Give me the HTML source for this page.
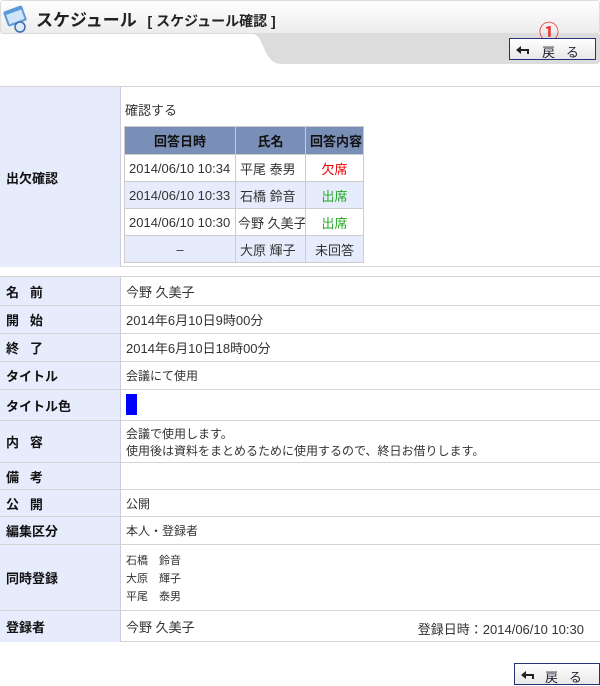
<!DOCTYPE html><html><head><meta charset="utf-8"><style>
*{margin:0;padding:0;box-sizing:border-box}
body{width:600px;height:685px;position:relative;background:#fff;font-family:"Liberation Sans","Noto Sans CJK JP",sans-serif;font-size:13px;color:#333;overflow:hidden}
.a{position:absolute;white-space:nowrap}
.lab{position:absolute;left:0;width:121px;background:#e6ecfb;border-right:1px solid #ccd;font-weight:bold;color:#111;padding-left:6px;display:flex;align-items:center;font-size:13px}
.row{position:absolute;left:0;width:600px;border-top:1px solid #d4d4d4}
.val{position:absolute;left:126px;display:flex;align-items:center;white-space:nowrap}
.btn{position:absolute;border:1px solid #223377;background:linear-gradient(#fff,#e8e8e8);font-size:13px;color:#223}
table.in{position:absolute;left:124px;top:126px;border-collapse:collapse;table-layout:fixed;width:239px}
table.in td,table.in th{border:1px solid #ccc;height:27px;font-size:13px;font-weight:normal;padding:0 4px;white-space:nowrap;overflow:hidden}
table.in th{background:#7a8fb8;font-weight:bold;color:#111;height:28px}
</style></head><body>
<div class="a" style="left:0;top:0;width:600px;height:34px;background:linear-gradient(#fff,#ececec);border:1px solid #ddd;border-radius:3px"></div>
<svg class="a" style="left:2px;top:3px" width="30" height="30"><rect x="3" y="5" width="20" height="16" rx="2" fill="#5a9ad8" transform="rotate(-20 13 13)"/><rect x="5" y="9" width="16" height="10" fill="#cfe4f7" transform="rotate(-20 13 13)"/><circle cx="18" cy="24" r="5" fill="#dfe9f5" stroke="#3a6fb0" stroke-width="1.5"/></svg>
<div class="a" style="left:36px;top:6px;font-size:17px;font-weight:bold;color:#222">スケジュール <span style="font-size:14px;margin-left:6px">[ スケジュール確認 ]</span></div>
<svg class="a" style="left:240px;top:34px" width="360" height="31"><path d="M0 0 H12 C25 0 22 30 42 30 H356 Q360 30 360 26 V0 Z" fill="#dcdcdc"/></svg>
<div class="a" style="left:539px;top:16px;color:#e33;font-size:20px;font-weight:bold">①</div>
<div class="btn" style="left:509px;top:38px;width:87px;height:22px"><svg class="a" style="left:5px;top:6px" width="16" height="10"><path d="M1 5 L6 1 V9 Z" fill="#222"/><path d="M5 5 H13 V9" stroke="#222" stroke-width="2" fill="none"/></svg><span class="a" style="left:32px;top:3px">戻&nbsp;&nbsp;&nbsp;る</span></div>

<div class="row" style="top:86px;height:181px;border-bottom:1px solid #d4d4d4"><div class="lab" style="top:0;height:180px">出欠確認</div></div>
<div class="a" style="left:125px;top:100px">確認する</div>
<table class="in">
<colgroup><col style="width:111px"><col style="width:70px"><col style="width:58px"></colgroup>
<tr><th style="text-align:center">回答日時</th><th>氏名</th><th>回答内容</th></tr>
<tr><td>2014/06/10 10:34</td><td>平尾 泰男</td><td style="color:#e00;text-align:center">欠席</td></tr>
<tr style="background:#e6ecfb"><td>2014/06/10 10:33</td><td>石橋 鈴音</td><td style="color:#2a2;text-align:center">出席</td></tr>
<tr><td>2014/06/10 10:30</td><td style="padding:0 2px">今野 久美子</td><td style="color:#2a2;text-align:center">出席</td></tr>
<tr style="background:#e6ecfb"><td style="text-align:center">–</td><td>大原 輝子</td><td style="text-align:center">未回答</td></tr>
</table>

<div class="row" style="top:276px;height:29px"><div class="lab" style="height:28px">名&nbsp;&nbsp;&nbsp;前</div><div class="val" style="height:28px">今野 久美子</div></div>
<div class="row" style="top:305px;height:28px"><div class="lab" style="height:27px">開&nbsp;&nbsp;&nbsp;始</div><div class="val" style="height:27px">2014年6月10日9時00分</div></div>
<div class="row" style="top:333px;height:28px"><div class="lab" style="height:27px">終&nbsp;&nbsp;&nbsp;了</div><div class="val" style="height:27px">2014年6月10日18時00分</div></div>
<div class="row" style="top:361px;height:28px"><div class="lab" style="height:27px">タイトル</div><div class="val" style="height:27px;font-size:12px">会議にて使用</div></div>
<div class="row" style="top:389px;height:31px"><div class="lab" style="height:30px">タイトル色</div><div class="a" style="left:126px;top:4px;width:11px;height:21px;background:#00f"></div></div>
<div class="row" style="top:420px;height:42px"><div class="lab" style="height:41px">内&nbsp;&nbsp;&nbsp;容</div><div class="a" style="left:126px;top:5px;line-height:17px;font-size:12px">会議で使用します。<br>使用後は資料をまとめるために使用するので、終日お借りします。</div></div>
<div class="row" style="top:462px;height:27px"><div class="lab" style="height:26px">備&nbsp;&nbsp;&nbsp;考</div></div>
<div class="row" style="top:489px;height:27px"><div class="lab" style="height:26px">公&nbsp;&nbsp;&nbsp;開</div><div class="val" style="height:26px;font-size:12px">公開</div></div>
<div class="row" style="top:516px;height:28px"><div class="lab" style="height:27px">編集区分</div><div class="val" style="height:27px;font-size:12px">本人・登録者</div></div>
<div class="row" style="top:544px;height:66px"><div class="lab" style="height:65px">同時登録</div><div class="a" style="left:126px;top:7px;font-size:11px;line-height:18px">石橋　鈴音<br>大原　輝子<br>平尾　泰男</div></div>
<div class="row" style="top:610px;height:32px;border-bottom:1px solid #d4d4d4"><div class="lab" style="height:31px">登録者</div><div class="val" style="height:31px">今野 久美子</div><div class="a" style="right:16px;top:8px">登録日時：2014/06/10 10:30</div></div>

<div class="btn" style="left:514px;top:663px;width:86px;height:22px"><svg class="a" style="left:5px;top:6px" width="16" height="10"><path d="M1 5 L6 1 V9 Z" fill="#222"/><path d="M5 5 H13 V9" stroke="#222" stroke-width="2" fill="none"/></svg><span class="a" style="left:30px;top:3px">戻&nbsp;&nbsp;&nbsp;る</span></div>
</body></html>
